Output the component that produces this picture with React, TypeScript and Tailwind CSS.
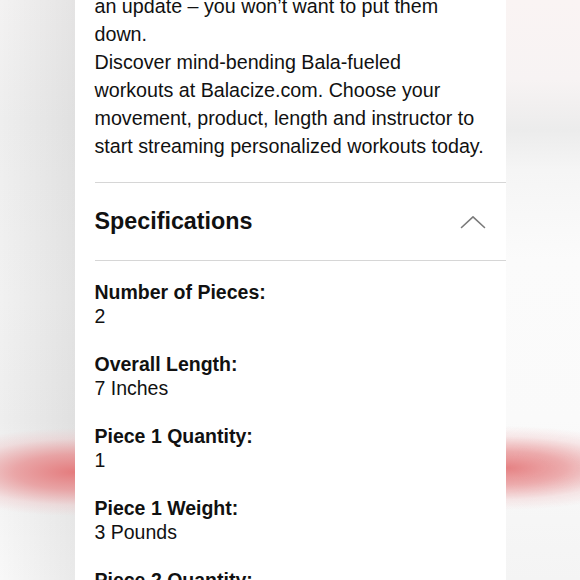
import React from "react";

const specs = [
  { label: "Number of Pieces:", value: "2" },
  { label: "Overall Length:", value: "7 Inches" },
  { label: "Piece 1 Quantity:", value: "1" },
  { label: "Piece 1 Weight:", value: "3 Pounds" },
  { label: "Piece 2 Quantity:", value: "1" },
];

function ChevronUp() {
  return (
    <svg width="26" height="14" viewBox="0 0 26 14" fill="none">
      <path d="M1.5 12.5 L13 1.8 L24.5 12.5" stroke="#7a7a7a" strokeWidth="1.6" strokeLinecap="round" strokeLinejoin="round" />
    </svg>
  );
}

export default function App() {
  return (
    <div className="w-full h-[580px] overflow-hidden flex font-['Liberation_Sans',Arial,sans-serif]">
      {/* blurred backdrop, left side */}
      <div className="flex-1 h-full bg-[image:radial-gradient(ellipse_150px_44px_at_100%_472px,rgba(228,118,120,0.95)_0%,rgba(232,140,142,0.75)_40%,rgba(240,188,190,0.35)_75%,rgba(245,220,222,0)_100%),linear-gradient(to_right,rgba(0,0,0,0),rgba(0,0,0,0.06)),linear-gradient(to_bottom,#f3f2f2_0px,#eeeeee_120px,#f1f1f1_300px,#eeeeee_420px,#f5f5f5_520px,#f8f8f8_580px)]"></div>

      <div className="w-[431px] h-full bg-white pl-[20px] text-[#111111]">
        <p className="-mt-[8px] text-[19.7px] leading-[28px] whitespace-nowrap">
          an update – you won’t want to put them
          <br />
          down.
          <br />
          Discover mind-bending Bala-fueled
          <br />
          workouts at Balacize.com. Choose your
          <br />
          movement, product, length and instructor to
          <br />
          start streaming personalized workouts today.
        </p>

        <div className="mt-[22px] h-px bg-[#d6d6d6]"></div>

        <div className="h-[77px] flex items-center justify-between pr-[20px]">
          <h2 className="text-[23.3px] font-bold leading-none">Specifications</h2>
          <ChevronUp />
        </div>

        <div className="h-px bg-[#d6d6d6]"></div>

        <div className="pt-[19px] flex flex-col gap-[24px]">
          {specs.map((s) => (
            <div key={s.label} className="text-[19.5px] leading-[24px]">
              <div className="font-bold">{s.label}</div>
              <div>{s.value}</div>
            </div>
          ))}
        </div>
      </div>

      {/* blurred backdrop, right side */}
      <div className="flex-1 h-full bg-[image:radial-gradient(ellipse_150px_42px_at_0%_468px,rgba(228,120,122,0.92)_0%,rgba(232,142,144,0.72)_40%,rgba(240,190,192,0.32)_75%,rgba(245,220,222,0)_100%),linear-gradient(to_bottom,#faf4f3_0px,#f7f3f3_80px,#ececec_130px,#f5f5f5_170px,#fbfbfb_260px,#fafafa_420px,#f6f6f6_520px,#f4f4f4_580px)]"></div>
    </div>
  );
}
